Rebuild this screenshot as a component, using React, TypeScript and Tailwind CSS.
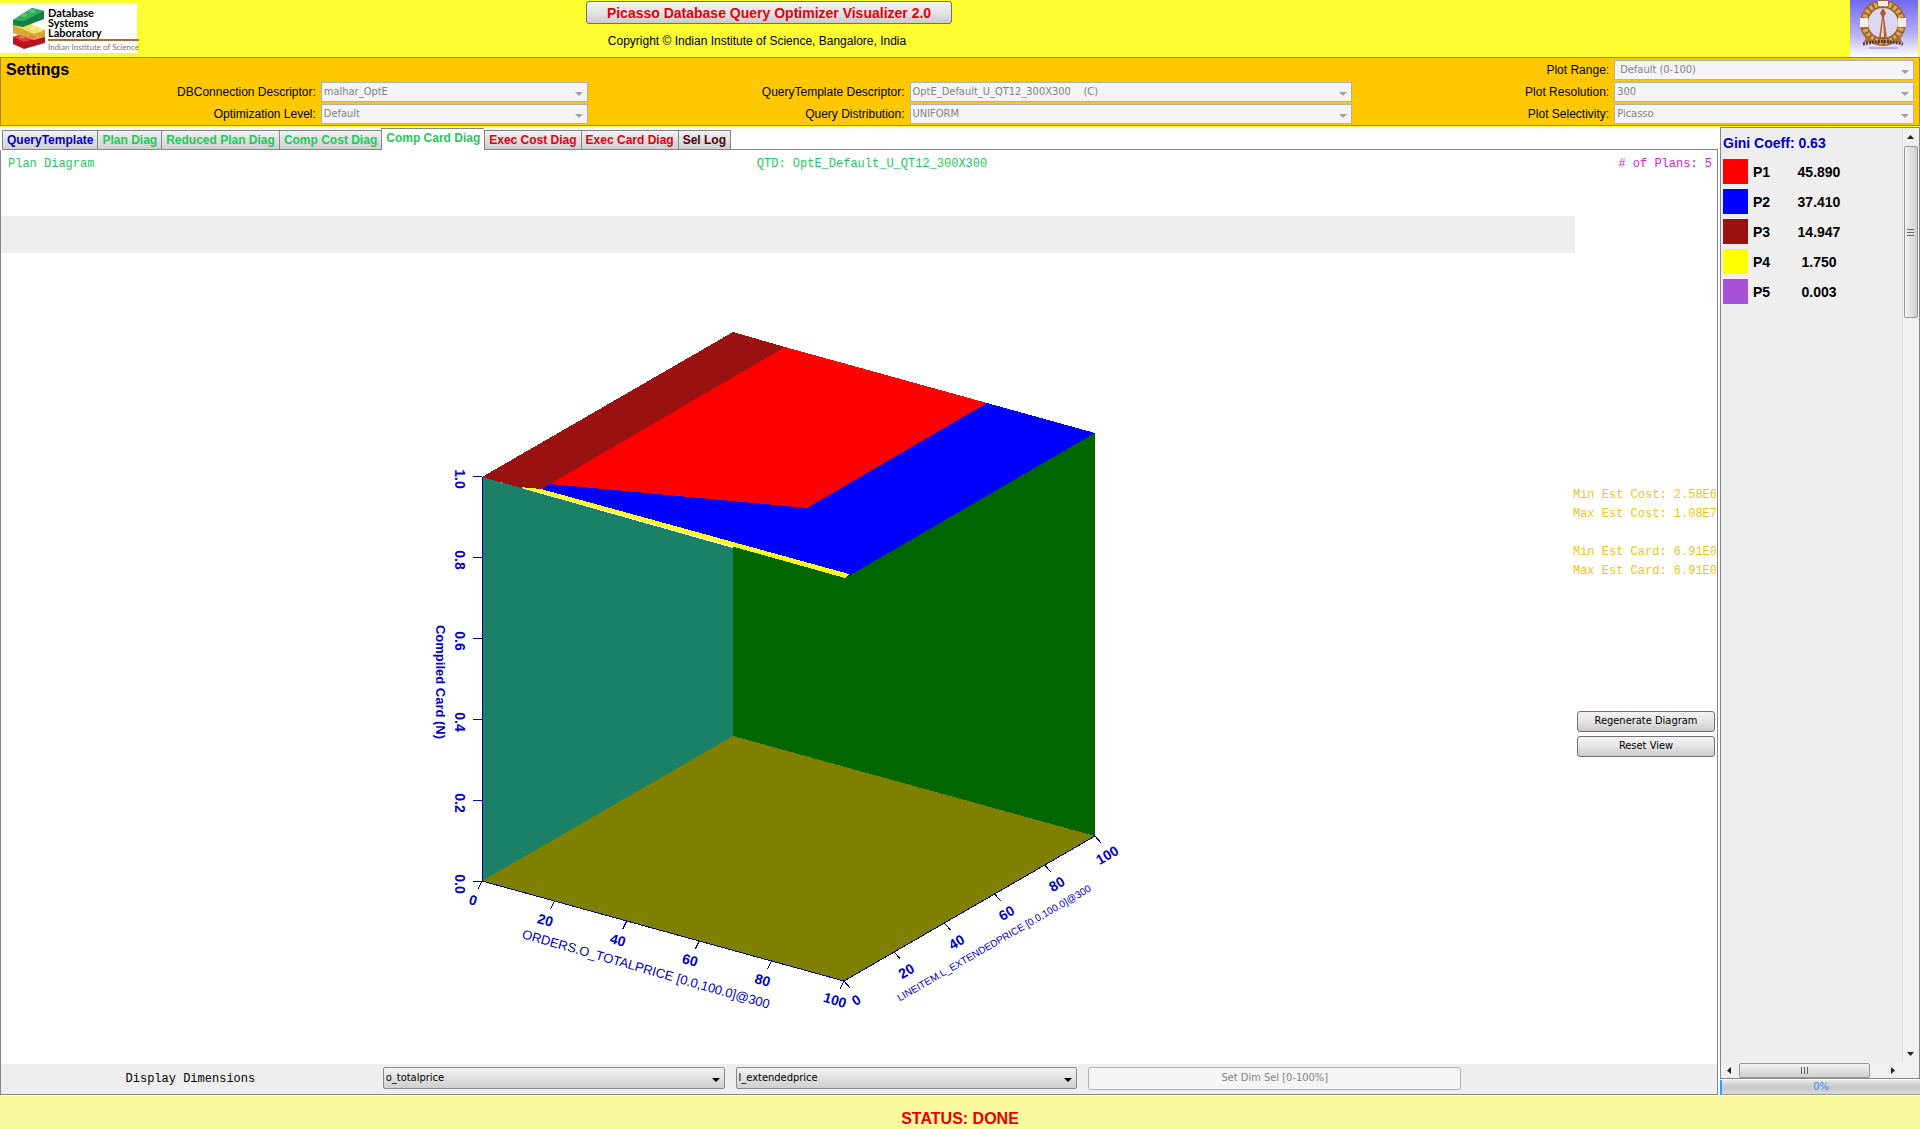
import { useState } from "react";
import clsx from "clsx";

const TABS = [
  { name: "QueryTemplate", color: "text-[#0000c8]" },
  { name: "Plan Diag", color: "text-[#1fc85a]" },
  { name: "Reduced Plan Diag", color: "text-[#1fc85a]" },
  { name: "Comp Cost Diag", color: "text-[#1fc85a]" },
  { name: "Comp Card Diag", color: "text-[#1fc85a]" },
  { name: "Exec Cost Diag", color: "text-[#e00010]" },
  { name: "Exec Card Diag", color: "text-[#e00010]" },
  { name: "Sel Log", color: "text-[#500010]" },
];

const PLANS = [
  { id: "P1", share: "45.890", color: "bg-[#ff0000]" },
  { id: "P2", share: "37.410", color: "bg-[#0000ff]" },
  { id: "P3", share: "14.947", color: "bg-[#991111]" },
  { id: "P4", share: "1.750", color: "bg-[#ffff00]" },
  { id: "P5", share: "0.003", color: "bg-[#a651d8]" },
];

const TAHOMA = "font-['DejaVu_Sans_Condensed','DejaVu_Sans',sans-serif]";
const COURIER = "font-['Liberation_Mono',monospace]";
const BUTTON =
  "rounded-[3px] border border-[#707070] bg-linear-to-b from-[#f3f3f3] via-[#e4e4e4] to-[#cbcbcb]";

function LabLogo() {
  return (
    <div className="flex h-[50px] w-[137px] items-center bg-white pl-3">
      <svg className="shrink-0" width="34" height="44" viewBox="0 0 34 44" aria-hidden="true">
        <path d="M1 31 16 26 33 30 33 37 12 43 1 38z" fill="#b81420" />
        <path d="M1 31 16 26 33 30 12 36z" fill="#e23a3c" />
        <path d="M1 19 10 17 33 24 33 31 22 34 1 27z" fill="#d9a832" />
        <path d="M1 19 14 16 33 24 22 28z" fill="#f5dc62" />
        <path d="M1 14 20 2 32 5 32 13 11 21 1 19z" fill="#138045" />
        <path d="M1 14 20 2 32 5 12 15z" fill="#36ab5c" />
        <g fill="#58c47a">
          <ellipse cx="12" cy="9" rx="3" ry="2" />
          <ellipse cx="20" cy="5" rx="3" ry="2" />
        </g>
        <g fill="#ffec94">
          <ellipse cx="21" cy="22" rx="3" ry="1.5" />
          <ellipse cx="28" cy="24" rx="2" ry="1.5" />
        </g>
        <g fill="#f07070">
          <ellipse cx="10" cy="31" rx="3" ry="1.5" />
          <ellipse cx="20" cy="31" rx="3" ry="1.5" />
        </g>
      </svg>
      <div className="ml-[2px] flex-1 pt-1 font-['Lato',sans-serif] text-[11px] leading-[10px] font-bold">
        <p>Database</p>
        <p>Systems</p>
        <p>Laboratory</p>
        <p className="mt-px border-t-2 border-[#a86840] pt-px text-[8px] font-normal whitespace-nowrap text-[#777]">
          Indian Institute of Science
        </p>
      </div>
    </div>
  );
}

function Emblem() {
  return (
    <svg width="68" height="57" viewBox="0 0 68 57" aria-label="Indian Institute of Science emblem">
      <defs>
        <linearGradient id="sky" x1="0" y1="0" x2="0" y2="1">
          <stop offset="0" stopColor="#7068f0" />
          <stop offset="0.6" stopColor="#b8b0f4" />
          <stop offset="1" stopColor="#ffffff" />
        </linearGradient>
      </defs>
      <rect width="68" height="57" fill="url(#sky)" />
      <ellipse cx="33" cy="23" rx="19" ry="19" fill="#dcd6ee" stroke="#9c642a" strokeWidth="8" />
      <ellipse
        cx="33"
        cy="23"
        rx="19"
        ry="19"
        fill="none"
        stroke="#d9a860"
        strokeWidth="5"
        strokeDasharray="3 2"
      />
      <path d="M28 1h10v5H28zM10 18h8v9h-8zM48 18h8v9h-8z" fill="#f4eee4" />
      <path d="M33 8 30 13 32 17 29 38H37L34 17 36 13z" fill="#a8603c" />
      <path d="M33 18 31 37H34z" fill="#f3dcc0" />
      <path d="M17 35 24 42H42L49 35 52 42H14z" fill="#a8702c" />
      <path d="M13 44Q33 39 53 44" fill="none" stroke="#54382c" strokeWidth="3" strokeDasharray="2 1" />
      <path d="M19 48H48" stroke="#b8b0e8" strokeWidth="2" />
    </svg>
  );
}

function Dropdown({
  id,
  label,
  value,
  disabled = false,
  indent = false,
}: {
  id: string;
  label?: string;
  value: string;
  disabled?: boolean;
  indent?: boolean;
}) {
  return (
    <div className="relative w-full self-start">
      <select
        id={id}
        aria-label={label}
        disabled={disabled}
        defaultValue={value}
        className={clsx(
          TAHOMA,
          "block w-full appearance-none border pr-5 text-[11px] leading-4 disabled:opacity-100",
          indent ? "pl-[5px]" : "pl-[2px]",
          disabled
            ? "h-5 border-[#adb2b5] bg-[#f4f4f4] text-[#838383]"
            : "h-[22px] rounded-[2px] border-[#8a8a8a] bg-linear-to-b from-[#f3f3f3] to-[#cfcfcf] text-black"
        )}
      >
        <option>{value}</option>
      </select>
      <svg
        className={clsx(
          "pointer-events-none absolute top-1/2 right-[5px]",
          disabled ? "fill-[#a0a0a0]" : "fill-black"
        )}
        width="8"
        height="4"
        viewBox="0 0 8 4"
        aria-hidden="true"
      >
        <path d="M0 0h8L4 4z" />
      </svg>
    </div>
  );
}

function Setting({
  id,
  label,
  value,
  indent,
}: {
  id: string;
  label: string;
  value: string;
  indent?: boolean;
}) {
  return (
    <>
      <label htmlFor={id} className="text-right text-[12px] leading-5 whitespace-nowrap">
        {label}
      </label>
      <div className="pl-[5px]">
        <Dropdown id={id} value={value} disabled indent={indent} />
      </div>
    </>
  );
}

const TICKS = [0, 1, 2, 3, 4, 5];

function CardDiagram() {
  return (
    <svg
      className="min-h-0 w-full flex-1"
      viewBox="1 253 1574 811"
      role="img"
      aria-label="Compiled cardinality diagram"
    >
      <g shapeRendering="crispEdges">
        <path d="M482 477 733 548V736L482 881z" fill="#1a8066" />
        <path d="M733 540 845 577 1095 433V836L733 736z" fill="#006600" />
        <path d="M482 881 733 736 1095 836 844 981z" fill="#808000" />
        <path d="M550 483 807 507 987 403 1095 433 847 577 541 490z" fill="#0000ff" />
        <path d="M785 347 987 403 807 508 550 484z" fill="#ff0000" />
        <path d="M482 477 733 332 785 347 550 484 541 490 521 488z" fill="#991111" />
        <path d="M520 487 541 489 849 574 845 578z" fill="#ffff22" />
        <g stroke="#0000a8" fill="none">
          <path d="M482 477V881L844 981 1095 836" />
          {TICKS.map((i) => (
            <path key={i} d={`M482 ${881 - i * 81}h-9`} />
          ))}
          {TICKS.map((i) => (
            <path key={i} d={`M${482 + i * 72.4} ${881 + i * 20}l-4 8`} />
          ))}
          {TICKS.map((i) => (
            <path key={i} d={`M${844 + i * 50.2} ${981 - i * 29}l6 7`} />
          ))}
        </g>
      </g>
      <g
        className="fill-[#0000c8] font-['Liberation_Sans',sans-serif] text-[14px] font-bold"
        textAnchor="middle"
        dominantBaseline="central"
      >
        {TICKS.map((i) => (
          <text key={i} transform={`translate(460 ${884 - i * 81}) rotate(90)`}>
            {(i / 5).toFixed(1)}
          </text>
        ))}
        <text transform="translate(440 682) rotate(90)" className="text-[13px]">
          Compiled Card (N)
        </text>
        {TICKS.map((i) => (
          <text key={i} transform={`translate(${473 + i * 72.4} ${900 + i * 20}) rotate(16)`}>
            {i * 20}
          </text>
        ))}
        <text transform="translate(646 969) rotate(16)" className="text-[13px] font-normal">
          ORDERS.O_TOTALPRICE [0.0,100.0]@300
        </text>
        {TICKS.map((i) => (
          <text key={i} transform={`translate(${856 + i * 50.2} ${1000 - i * 29}) rotate(-30)`}>
            {i * 20}
          </text>
        ))}
        <text transform="translate(994 943) rotate(-30)" className="text-[10px] font-normal">
          LINEITEM.L_EXTENDEDPRICE [0.0,100.0]@300
        </text>
      </g>
    </svg>
  );
}

function ScrollArrow({ label, d }: { label: string; d: string }) {
  return (
    <button type="button" aria-label={label} className="flex size-[17px] items-center justify-center">
      <svg width="7" height="7" viewBox="0 0 7 7" aria-hidden="true">
        <path d={d} fill="#222" />
      </svg>
    </button>
  );
}

function PlanLegend() {
  return (
    <aside className="flex w-[200px] shrink-0 flex-col">
      <div className="flex flex-1 flex-col border border-[#82878f] bg-[#eee]">
        <div className="flex flex-1">
          <div className="flex-1 pt-[7px] pl-[2px] text-[14px] font-bold">
            <h2 className="leading-4 text-[#0000c8]">Gini Coeff: 0.63</h2>
            <table className="mt-[5px]">
              <tbody>
                {PLANS.map((plan) => (
                  <tr key={plan.id} className="h-[30px]">
                    <td className="w-[30px] p-0">
                      <div className={clsx("size-[25px]", plan.color)} />
                    </td>
                    <td className="w-8 p-0 pt-[2px]">{plan.id}</td>
                    <td className="w-[68px] p-0 pt-[2px] text-center">{plan.share}</td>
                  </tr>
                ))}
              </tbody>
            </table>
          </div>
          <div className="flex w-[17px] flex-col items-center border-l border-[#e3e3e3] bg-[#f0f0f0] pt-px pr-px">
            <ScrollArrow label="Scroll up" d="M0 5h7L3.500 1z" />
            <div className="flex h-[172px] w-[14px] items-center justify-center rounded-[2px] border border-[#989898] bg-linear-to-r from-[#f3f3f3] to-[#cfcfcf]">
              <div className="h-[7px] w-[7px] border-y border-[#666] py-[2px]">
                <div className="h-px bg-[#666]" />
              </div>
            </div>
            <div className="flex-1" />
            <ScrollArrow label="Scroll down" d="M0 2h7L3.500 6z" />
          </div>
        </div>
        <div className="flex h-4 items-center bg-[#f0f0f0] pr-[18px]">
          <ScrollArrow label="Scroll left" d="M5 0v7L1 3.500z" />
          <div className="ml-px flex h-[15px] w-[131px] items-center justify-center rounded-[2px] border border-[#989898] bg-linear-to-b from-[#f3f3f3] to-[#cfcfcf]">
            <div className="h-[7px] w-[7px] border-x border-[#666] px-[2px]">
              <div className="h-[7px] w-px bg-[#666]" />
            </div>
          </div>
          <div className="flex-1" />
          <ScrollArrow label="Scroll right" d="M2 0v7L6 3.500z" />
        </div>
      </div>
      <div
        role="progressbar"
        aria-label="Diagram progress"
        aria-valuenow={0}
        className={clsx(
          TAHOMA,
          "mt-px mb-px h-[15px] border-b border-l-2 border-b-[#9a9aa0] border-l-[#3399ff] bg-linear-to-b from-[#e8e8e8] via-[#c8c8c8] to-[#d8d8d8] text-center text-[11px] leading-[14px] text-[#3390f0]"
        )}
      >
        0%
      </div>
    </aside>
  );
}

export default function App() {
  const [activeTab, setActiveTab] = useState("Comp Card Diag");

  return (
    <div className="flex min-h-screen flex-col bg-white font-['Liberation_Sans',Arial,sans-serif] text-black">
      <header className="grid h-[57px] grid-cols-[137px_1264fr_519fr] bg-[#fcfc2e]">
        <div className="pt-[3px]">
          <LabLogo />
        </div>
        <div className="flex flex-col items-center pt-px">
          <button
            type="button"
            className={clsx(BUTTON, "h-[23px] px-5 text-[14px] leading-5 font-bold text-[#e00010]")}
          >
            Picasso Database Query Optimizer Visualizer 2.0
          </button>
          <p className="mt-[9px] pr-6 text-[12px] leading-4">
            Copyright © Indian Institute of Science, Bangalore, India
          </p>
        </div>
        <div className="flex justify-end pr-[2px]">
          <Emblem />
        </div>
      </header>

      <section className="border-b border-[#fcfc2e] bg-[#fcfc2e]">
        <div className="grid h-[69px] auto-rows-[20px] grid-cols-[315fr_272fr_317fr_448fr_257fr_305fr] content-start gap-y-[2px] border border-[#a08a10] bg-[#ffc800] pt-[2px] pr-[5px]">
          <h1 className="pl-[5px] text-[16px] leading-5 font-bold">Settings</h1>
          <div className="col-span-3" />
          <Setting id="range" label="Plot Range:" value="Default (0-100)" indent />
          <Setting id="connection" label="DBConnection Descriptor:" value="malhar_OptE" />
          <Setting
            id="template"
            label="QueryTemplate Descriptor:"
            value={"OptE_Default_U_QT12_300X300\u00a0\u00a0\u00a0\u00a0(C)"}
          />
          <Setting id="resolution" label="Plot Resolution:" value="300" />
          <Setting id="level" label="Optimization Level:" value="Default" />
          <Setting id="distribution" label="Query Distribution:" value="UNIFORM" />
          <Setting id="selectivity" label="Plot Selectivity:" value="Picasso" />
        </div>
      </section>

      <div className="flex flex-1 gap-[2px]">
        <main className="flex min-w-0 flex-1 flex-col">
          <div role="tablist" className="flex h-[23px] items-end pl-[2px]">
            {TABS.map((tab) => (
              <button
                key={tab.name}
                type="button"
                role="tab"
                aria-selected={tab.name === activeTab}
                onClick={() => setActiveTab(tab.name)}
                className={clsx(
                  "border-t border-l border-[#82878f] px-1 text-[12px] leading-[18px] font-bold whitespace-nowrap",
                  tab.color,
                  tab.name === activeTab
                    ? "h-[22px] bg-white pb-[3px]"
                    : "h-5 border-b bg-linear-to-b from-[#f2f2f2] to-[#cfcfcf]"
                )}
              >
                {tab.name}
              </button>
            ))}
            <div className="h-5 flex-1 border-b border-l border-[#82878f]" />
          </div>

          <div className="mb-px flex flex-1 flex-col border-x border-b border-[#82878f]">
            <div
              className={clsx(
                COURIER,
                "grid h-[66px] grid-cols-3 pt-[6px] pr-[5px] pl-[7px] text-[12px] leading-4"
              )}
            >
              <span className="text-[#1fc85a]">Plan Diagram</span>
              <span className="pl-6 text-center text-[#1fc85a]">QTD: OptE_Default_U_QT12_300X300</span>
              <span className="text-right text-[#d822d8]"># of Plans: 5</span>
            </div>

            <div className="flex flex-1">
              <div className="flex min-w-0 flex-1 flex-col">
                <div className="h-[37px] bg-[#eee]" />
                <CardDiagram />
              </div>
              <div className="flex w-[142px] flex-col justify-center pb-[38px]">
                <div
                  className={clsx(
                    COURIER,
                    "self-end text-[12px] leading-[19px] whitespace-nowrap text-[#f0c420]"
                  )}
                >
                  <p>Min Est Cost: 2.58E6</p>
                  <p>Max Est Cost: 1.08E7</p>
                  <p className="mt-[19px]">Min Est Card: 6.91E0</p>
                  <p>Max Est Card: 6.91E0</p>
                </div>
                <div className={clsx(TAHOMA, "mt-[130px] flex flex-col gap-1 px-[2px] text-[11px]")}>
                  <button type="button" className={clsx(BUTTON, "h-[21px]")}>
                    Regenerate Diagram
                  </button>
                  <button type="button" className={clsx(BUTTON, "h-[21px]")}>
                    Reset View
                  </button>
                </div>
              </div>
            </div>

            <div className="grid h-[30px] grid-cols-[371fr_342fr_342fr_373fr_245fr] gap-x-[11px] bg-[#eee] pt-[3px]">
              <span className={clsx(COURIER, "pl-2 text-center text-[12px] leading-6")}>
                Display Dimensions
              </span>
              <Dropdown id="dim-x" label="First dimension" value="o_totalprice" />
              <Dropdown id="dim-y" label="Second dimension" value="l_extendedprice" />
              <button
                type="button"
                disabled
                className={clsx(
                  TAHOMA,
                  "h-[23px] rounded-[3px] border border-[#adb2b5] bg-[#f4f4f4] text-[11px] text-[#838383]"
                )}
              >
                Set Dim Sel [0-100%]
              </button>
            </div>
          </div>
        </main>

        <PlanLegend />
      </div>

      <footer className="flex h-[33px] items-center justify-center bg-[#f9f89c] pt-3 text-[16px] leading-5 font-bold text-[#e80000]">
        STATUS: DONE
      </footer>
    </div>
  );
}
